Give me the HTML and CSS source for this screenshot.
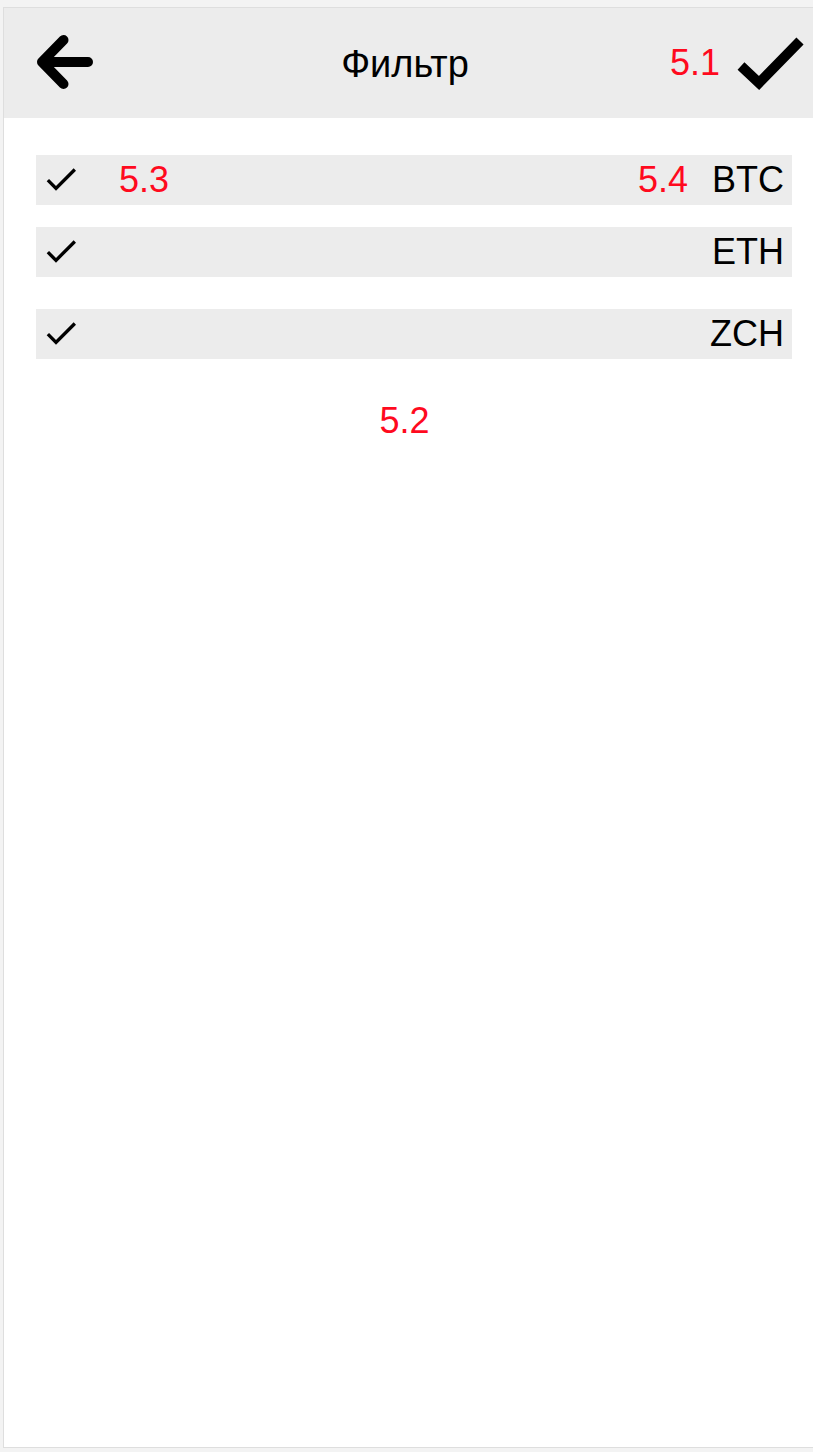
FILE: index.html
```html
<!DOCTYPE html>
<html lang="ru">
<head>
<meta charset="utf-8">
<title>Фильтр</title>
<link rel="stylesheet" href="styles.css">
</head>
<body>
<div class="frame">
  <header class="topbar">
    <div class="bar-left">
      <svg class="back-icon" width="70" height="70" viewBox="0 0 70 70" aria-hidden="true">
        <path d="M33.5 12 L12 34 L33.5 56 M12 34 H58" fill="none" stroke="#000" stroke-width="10" stroke-linecap="round" stroke-linejoin="round"/>
      </svg>
    </div>
    <h1 class="title">Фильтр</h1>
    <div class="bar-right">
      <span class="note">5.1</span>
      <svg class="ok-icon" width="72" height="60" viewBox="0 0 72 60" aria-hidden="true">
        <path d="M5 29 L23 46 L64 4" fill="none" stroke="#000" stroke-width="10"/>
      </svg>
    </div>
  </header>

  <main class="content">
    <ul class="coin-list">
      <li class="coin-row">
        <svg class="tick" width="40" height="40" viewBox="0 0 24 24" aria-hidden="true"><path d="M9 16.17L4.83 12l-1.42 1.41L9 19 21 7l-1.41-1.41z"/></svg>
        <span class="note note-left">5.3</span>
        <span class="spacer"></span>
        <span class="note note-right">5.4</span>
        <span class="coin">BTC</span>
      </li>
      <li class="coin-row row-eth">
        <svg class="tick" width="40" height="40" viewBox="0 0 24 24" aria-hidden="true"><path d="M9 16.17L4.83 12l-1.42 1.41L9 19 21 7l-1.41-1.41z"/></svg>
        <span class="spacer"></span>
        <span class="coin">ETH</span>
      </li>
      <li class="coin-row row-zch">
        <svg class="tick" width="40" height="40" viewBox="0 0 24 24" aria-hidden="true"><path d="M9 16.17L4.83 12l-1.42 1.41L9 19 21 7l-1.41-1.41z"/></svg>
        <span class="spacer"></span>
        <span class="coin">ZCH</span>
      </li>
    </ul>
    <p class="note note-center">5.2</p>
  </main>
</div>
</body>
</html>
```

FILE: styles.css
```css
html, body {
  margin: 0;
  padding: 0;
}

body {
  background: #f3f3f3;
  font-family: "Liberation Sans", Arial, sans-serif;
  color: #000;
  padding: 7px 0 0 3px;
  overflow: hidden;
}

.frame {
  width: 820px;
  height: 1439px;
  background: #fff;
  border: 1px solid #dedede;
  border-right: none;
}

.topbar {
  height: 110px;
  background: #ececec;
  display: grid;
  grid-template-columns: 1fr auto 1fr;
  align-items: center;
}

.bar-left {
  display: flex;
  align-items: center;
  padding-left: 26px;
}

.back-icon {
  display: block;
}

.title {
  margin: 0;
  font-weight: normal;
  font-size: 38px;
  line-height: 40px;
  margin-left: -18px;
  padding-top: 2px;
}

.bar-right {
  display: flex;
  align-items: center;
  justify-content: flex-end;
  padding-right: 16px;
}

.note {
  color: #ff0a1e;
  font-size: 36px;
  line-height: 40px;
}

.ok-icon {
  display: block;
  margin-left: 16px;
  margin-top: 7px;
}

.content {
  padding: 37px 32px 0 32px;
}

.coin-list {
  list-style: none;
  margin: 0;
  padding: 0;
}

.coin-row {
  height: 50px;
  background: #ececec;
  display: flex;
  align-items: center;
  padding: 0 8px 0 5px;
}

.row-eth {
  margin-top: 22px;
}

.row-zch {
  margin-top: 32px;
}

.tick {
  display: block;
  flex: none;
  margin-top: -2px;
}

.note-left {
  margin-left: 38px;
}

.spacer {
  flex: 1;
}

.note-right {
  margin-right: 24px;
}

.coin {
  font-size: 36px;
  line-height: 40px;
}

.note-center {
  margin: 42px 0 0;
  text-align: center;
  padding-right: 19px;
}
```
